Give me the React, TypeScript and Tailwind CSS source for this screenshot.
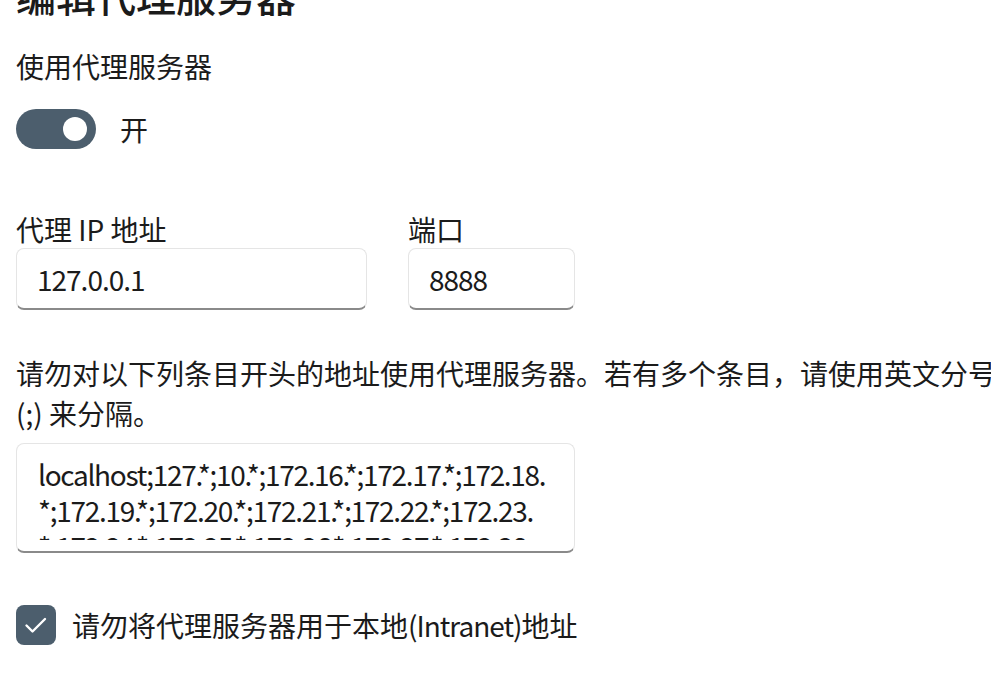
import React, { useState } from "react";

const bypassLines = [
  "localhost;127.*;10.*;172.16.*;172.17.*;172.18.",
  "*;172.19.*;172.20.*;172.21.*;172.22.*;172.23.",
  "*;172.24.*;172.25.*;172.26.*;172.27.*;172.28.",
];

const TextField = ({ value, width }: { value: string; width: string }) => (
  <div
    className={`${width} h-[62px] flex items-center rounded-[8px] border border-[#e5e5e5] border-b-2 border-b-[#8a8a8a] bg-white pl-[20px] text-[28px] tracking-[-1px]`}
  >
    {value}
  </div>
);

const App = () => {
  const [enabled, setEnabled] = useState<boolean>(true);
  const [skipLocal, setSkipLocal] = useState<boolean>(true);

  return (
    <div
      className="w-[991px] h-[685px] overflow-hidden bg-white px-[16px] text-[#1b1b1b]"
      style={{ fontFamily: '"Noto Sans CJK SC", "Noto Sans", sans-serif' }}
    >
      <h2 className="mt-[-31px] text-[40px] leading-[52px] font-medium whitespace-nowrap">
        编辑代理服务器
      </h2>

      <p className="mt-[25px] text-[28px] leading-[40px]">使用代理服务器</p>

      <div className="mt-[23px] flex items-center gap-[24px]">
        <button
          onClick={() => setEnabled(!enabled)}
          className={`w-[80px] h-[40px] rounded-full flex items-center px-[9px] ${
            enabled ? "bg-[#4c5e6d] justify-end" : "border-2 border-[#5f5f5f] justify-start"
          }`}
        >
          <span
            className={`block w-[24px] h-[24px] rounded-full ${enabled ? "bg-white" : "bg-[#5f5f5f]"}`}
          />
        </button>
        <span className="text-[28px] leading-[40px]">{enabled ? "开" : "关"}</span>
      </div>

      <div className="mt-[61px] flex gap-[41px]">
        <div>
          <label className="block text-[28px] leading-[38px]">代理 IP 地址</label>
          <TextField value="127.0.0.1" width="w-[351px]" />
        </div>
        <div>
          <label className="block text-[28px] leading-[38px]">端口</label>
          <TextField value="8888" width="w-[167px]" />
        </div>
      </div>

      <p className="mt-[43px] w-[1100px] text-[28px] leading-[40px]">
        <span className="whitespace-nowrap">
          请勿对以下列条目开头的地址使用代理服务器。若有多个条目，请使用英文分号
        </span>
        <br />
        (;) 来分隔。
      </p>

      <div className="mt-[10px] w-[559px] h-[110px] rounded-[8px] border border-[#e5e5e5] border-b-2 border-b-[#8a8a8a] bg-white pl-[21px] pr-[10px] pt-[12px] pb-[11px]">
        <div className="h-full overflow-hidden text-[28px] leading-[36px] tracking-[-1.3px] whitespace-nowrap">
          {bypassLines.map((line) => (
            <div key={line}>{line}</div>
          ))}
        </div>
      </div>

      <label
        className="mt-[52px] flex items-center gap-[16px] cursor-pointer"
        onClick={() => setSkipLocal(!skipLocal)}
      >
        <span
          className={`w-[40px] h-[40px] rounded-[8px] flex items-center justify-center ${
            skipLocal ? "bg-[#4c5e6d]" : "border-2 border-[#8a8a8a]"
          }`}
        >
          {skipLocal && (
            <svg width="40" height="40" viewBox="0 0 40 40" fill="none">
              <path
                d="M10.5 20.5 L16.5 26.5 L29 14"
                stroke="white"
                strokeWidth="2.4"
                strokeLinecap="round"
                strokeLinejoin="round"
              />
            </svg>
          )}
        </span>
        <span className="text-[28px] leading-[40px]">
          请勿将代理服务器用于本地<span className="tracking-[-1px]">(Intranet)</span>地址
        </span>
      </label>
    </div>
  );
};

export default App;
